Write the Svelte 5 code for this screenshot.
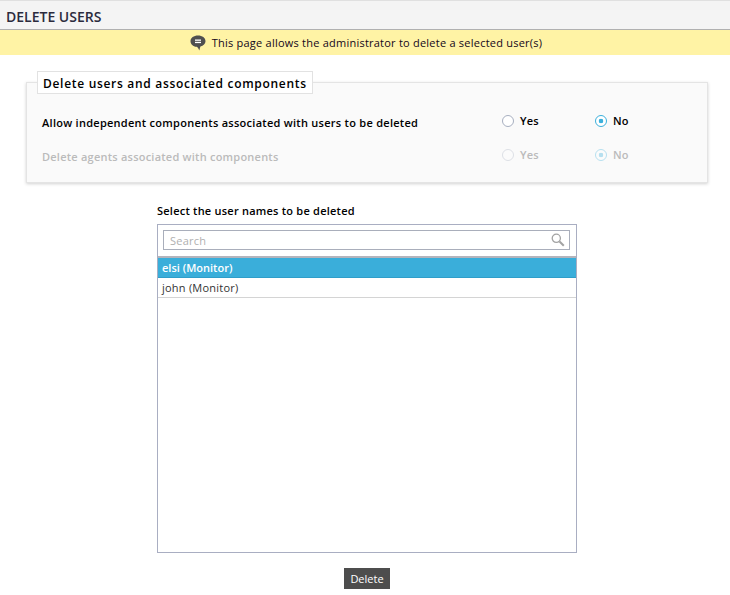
<script>
  let users = ['elsi (Monitor)', 'john (Monitor)']
  let selected = 0
</script>

<div class="page">
  <h1 class="title">DELETE USERS</h1>
  <div class="notice">
    <svg class="notice-icon" width="16" height="16" viewBox="0 0 16 16">
      <path d="M8 .5C3.7.5.5 2.8.5 6.2c0 3 2.6 5.3 6 5.6.9 0 1.700 1.200 2.800 3.700.5-1.600.7-2.900 1.100-3.900 2.900-.7 5.100-2.900 5.100-5.400C15.500 2.800 12.300.5 8 .5z" fill="#4f4f4f"/>
      <rect x="5" y="4.500" width="6" height="1.300" fill="#fff"/>
      <rect x="5" y="6.800" width="6" height="1.300" fill="#fff"/>
    </svg>
    <span>This page allows the administrator to delete a selected user(s)</span>
  </div>

  <fieldset class="panel">
    <legend>Delete users and associated components</legend>
    <div class="row">
      <span class="label">Allow independent components associated with users to be deleted</span>
      <span class="opt yes"><i class="radio"></i>Yes</span>
      <span class="opt"><i class="radio on"></i>No</span>
    </div>
    <div class="row disabled">
      <span class="label">Delete agents associated with components</span>
      <span class="opt yes"><i class="radio"></i>Yes</span>
      <span class="opt"><i class="radio on"></i>No</span>
    </div>
  </fieldset>

  <div class="picker">
    <div class="picker-title">Select the user names to be deleted</div>
    <div class="box">
      <div class="search-wrap">
        <div class="search">
          <span>Search</span>
          <svg width="14" height="14" viewBox="0 0 14 14" fill="none" stroke="#a3a3a3">
            <circle cx="5.300" cy="5.300" r="4.100" stroke-width="1.300"/>
            <path d="M8.500 8.500l4.300 4.300" stroke-width="2"/>
          </svg>
        </div>
      </div>
      {#each users as user, i}
        <div class="user" class:selected={i === selected}>{user}</div>
      {/each}
    </div>
  </div>

  <div class="actions">
    <button type="button" class="delete">Delete</button>
  </div>
</div>

<style>
  :global(body) {
    background: #fff;
  }

  .page {
    width: 730px;
    height: 595px;
    overflow: hidden;
    font-family: "Open Sans", sans-serif;
    font-size: 11px;
    letter-spacing: 0.23px;
    color: #000;
  }

  .title {
    margin: 0;
    height: 28px;
    box-sizing: content-box;
    border-top: 1px solid #e0e0e0;
    border-bottom: 1px solid #b0b0b0;
    background: #f4f4f4;
    padding-left: 6px;
    font-size: 14px;
    font-weight: 600;
    line-height: 32px;
    letter-spacing: 0;
    color: #2b2b3d;
  }

  .notice {
    height: 25px;
    background: #fff3a5;
    display: flex;
    align-items: center;
    justify-content: center;
    gap: 6px;
    padding-left: 2px;
    color: #14061a;
  }

  .notice-icon {
    margin-top: 1px;
  }

  .panel {
    margin: 16px 22px 0 26px;
    padding: 0 0 0 15px;
    height: 112px;
    box-sizing: border-box;
    border: 1px solid #e4e4e4;
    background: #fafafa;
    box-shadow: 0 1px 3px rgba(0, 0, 0, 0.18);
    min-inline-size: 0;
  }

  legend {
    margin-left: -5px;
    padding: 0 5px;
    height: 23px;
    box-sizing: border-box;
    border: 1px solid #e2e2e2;
    background: #fff;
    font-size: 12px;
    font-weight: 600;
    line-height: 23px;
    letter-spacing: 0.7px;
  }

  .row {
    display: flex;
    align-items: center;
    height: 34px;
    font-weight: 600;
    letter-spacing: 0.27px;
  }

  .row:first-of-type {
    margin-top: 11px;
  }

  .label {
    width: 460px;
  }

  .disabled .label {
    letter-spacing: 0.23px;
  }

  .opt {
    display: flex;
    align-items: center;
    gap: 6px;
    margin-bottom: 3px;
    letter-spacing: 0.25px;
  }

  .yes {
    width: 93px;
  }

  .radio {
    width: 10px;
    height: 10px;
    border: 1px solid #a7afc0;
    border-radius: 50%;
    background: #fff;
    display: block;
  }

  .radio.on {
    border-color: #3bb0dc;
    background: radial-gradient(circle, #3bb0dc 0 2px, #fff 2.6px);
  }

  .disabled {
    color: #bbb;
  }

  .disabled .radio {
    opacity: 0.35;
  }

  .picker {
    margin: 21px 153px 0 157px;
  }

  .picker-title {
    height: 20px;
    line-height: 14px;
    font-weight: 600;
  }

  .box {
    height: 329px;
    box-sizing: border-box;
    border: 1px solid #a9aec2;
    background: #fff;
  }

  .search-wrap {
    padding: 5px 6px 6px 5px;
    border-bottom: 2px solid #b4b4bc;
  }

  .search {
    height: 20px;
    box-sizing: border-box;
    border: 1px solid #a9aebb;
    padding: 0 4px 0 6px;
    display: flex;
    align-items: center;
    justify-content: space-between;
    color: #b0b0b0;
  }

  .user {
    height: 20px;
    box-sizing: border-box;
    padding-left: 4px;
    line-height: 19px;
    border-bottom: 1px solid #d4d4d4;
    color: #333;
  }

  .user.selected {
    background: #3aaeda;
    border-bottom-color: #2f9ec9;
    color: #fff;
    font-weight: 600;
    letter-spacing: 0;
  }

  .actions {
    display: flex;
    justify-content: center;
    margin-top: 15px;
    padding-left: 4px;
  }

  .delete {
    all: unset;
    width: 46px;
    height: 21px;
    background: #4d4d4d;
    color: #fff;
    text-align: center;
    font-size: 11px;
    line-height: 21px;
    letter-spacing: 0;
  }
</style>
